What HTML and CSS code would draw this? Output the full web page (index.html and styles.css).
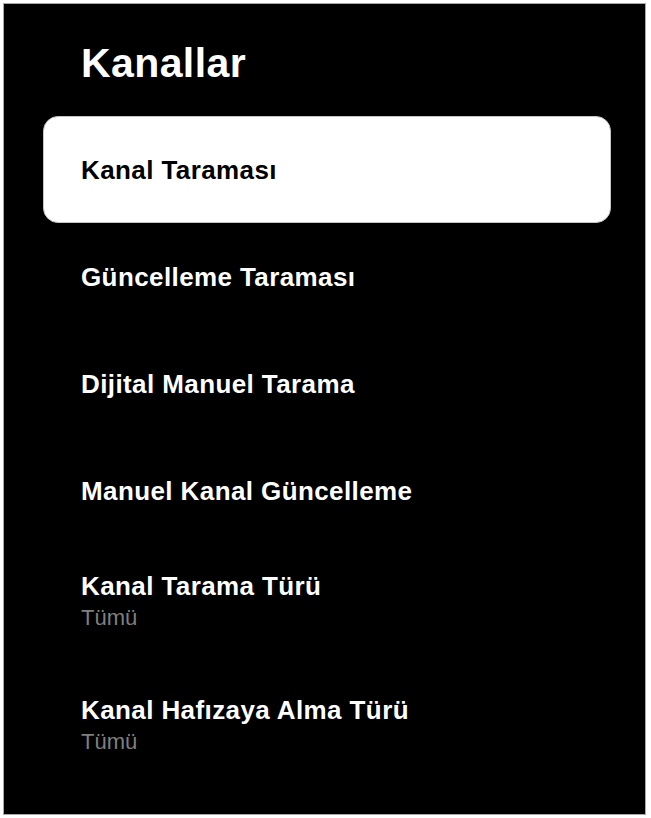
FILE: index.html
```html
<!DOCTYPE html>
<html lang="tr">
<head>
<meta charset="utf-8">
<title>Kanallar</title>
<link rel="stylesheet" href="styles.css">
</head>
<body>
<div class="panel">
  <h1 class="title">Kanallar</h1>
  <ul class="menu">
    <li class="item selected"><span class="label">Kanal Taraması</span></li>
    <li class="item"><span class="label">Güncelleme Taraması</span></li>
    <li class="item"><span class="label">Dijital Manuel Tarama</span></li>
    <li class="item"><span class="label">Manuel Kanal Güncelleme</span></li>
    <li class="item two-line"><span class="label">Kanal Tarama Türü</span><span class="value">Tümü</span></li>
    <li class="item two-line"><span class="label">Kanal Hafızaya Alma Türü</span><span class="value">Tümü</span></li>
  </ul>
</div>
</body>
</html>
```

FILE: styles.css
```css
html, body {
  margin: 0;
  padding: 0;
  background: #ffffff;
}
body {
  padding: 3px 5px 3px 3px;
  font-family: "Liberation Sans", Arial, sans-serif;
}
.panel {
  box-sizing: border-box;
  height: 812px;
  background: #000000;
  border: 1px solid #a8a8a8;
  padding: 0 34px 0 39px;
  overflow: hidden;
}
.title {
  margin: 34px 0 0 38px;
  font-size: 41px;
  line-height: 50px;
  font-weight: bold;
  letter-spacing: 0.4px;
  color: #ffffff;
}
.menu {
  list-style: none;
  margin: 28px 0 0 0;
  padding: 0;
}
.item {
  box-sizing: border-box;
  height: 107px;
  display: flex;
  flex-direction: column;
  justify-content: center;
  padding-left: 38px;
  color: #ffffff;
}
.label {
  font-size: 26px;
  line-height: 30px;
  font-weight: bold;
  letter-spacing: 0.4px;
}
.item.selected {
  background: #ffffff;
  color: #000000;
  border-radius: 15px;
  border: 1px solid #c4c4c4;
  padding-left: 37px;
}
.item.two-line {
  height: 124px;
  justify-content: flex-start;
  padding-top: 27px;
}
.value {
  margin-top: 5px;
  font-size: 22px;
  line-height: 24px;
  color: #7f7f7f;
}
```
